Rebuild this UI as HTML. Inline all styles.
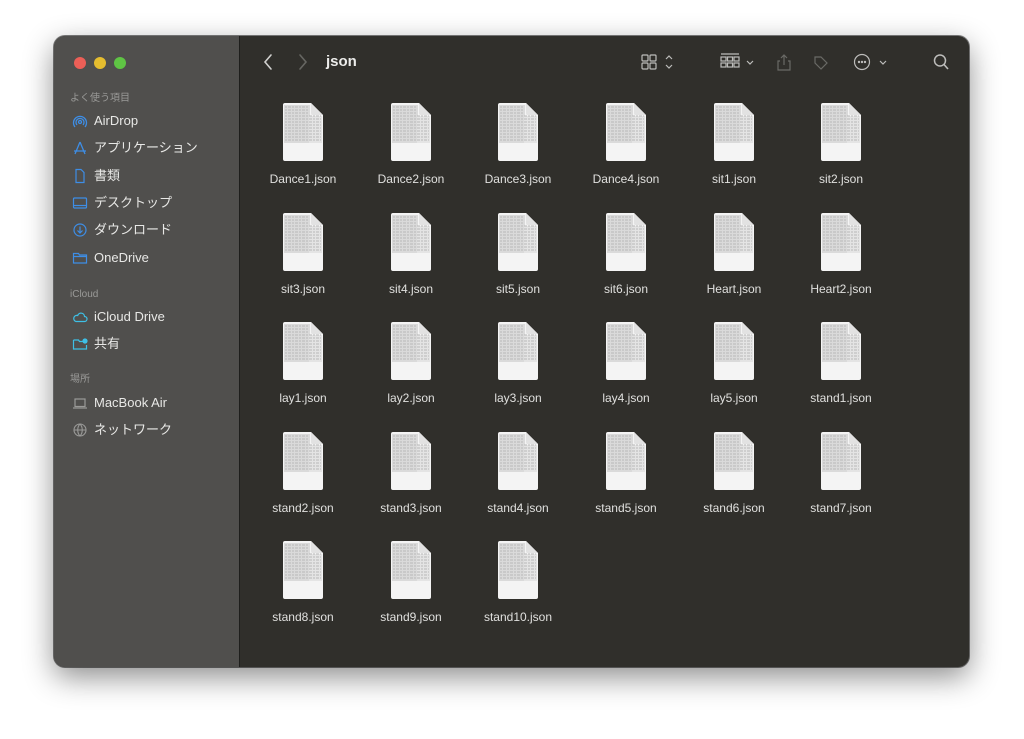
<!DOCTYPE html>
<html><head><meta charset="utf-8"><style>
*{margin:0;padding:0;box-sizing:border-box}
body{width:1024px;height:739px;background:#fff;font-family:"Liberation Sans","Noto Sans CJK JP",sans-serif;position:relative;overflow:hidden}
.win{position:absolute;left:54px;top:36px;width:915px;height:631px;border-radius:11px;background:#302f2b;box-shadow:0 10px 30px rgba(0,0,0,.45),0 0 0 1px rgba(0,0,0,.5);overflow:hidden}
.side{position:absolute;left:0;top:0;width:186px;height:100%;background:#504f4d;border-right:1px solid #1e1e1c}
.dot{position:absolute;top:21px;width:12px;height:12px;border-radius:50%}
.hd{position:absolute;left:16px;font-size:10px;line-height:12px;color:#9a9a98}
.it{position:absolute;left:18px;height:16px;line-height:16px;font-size:13px;color:#e8e8e6;white-space:nowrap}
.it svg{position:absolute;left:0;top:0;width:16px;height:16px}
.it span{position:absolute;left:22px;top:0}
.t{position:absolute;color:#dcdcda}
.f{position:absolute;width:44px;height:58px}
.lb{position:absolute;width:110px;text-align:center;font-size:12px;color:#e0e0de}
</style></head><body>
<div class="win">
<div class="side">
<div class="dot" style="left:20px;background:#ec5f57"></div>
<div class="dot" style="left:40px;background:#e5bd2f"></div>
<div class="dot" style="left:60px;background:#5fc444"></div>
<div class="hd" style="top:57px">よく使う項目</div>
<div class="it" style="top:77px"><svg viewBox="0 0 16 16" fill="none" stroke="#3e8ee6" stroke-width="1.3"><circle cx="8" cy="9" r="1.5"/><path d="M5 12a4 4 0 1 1 6 0M3 14a6.5 6.5 0 1 1 10 0"/></svg><span>AirDrop</span></div>
<div class="it" style="top:104px"><svg viewBox="0 0 16 16" fill="none" stroke="#3e8ee6" stroke-width="1.3"><path d="M8 2L3 14M8 2l5 12M2 11h12"/></svg><span>アプリケーション</span></div>
<div class="it" style="top:132px"><svg viewBox="0 0 16 16" fill="none" stroke="#3e8ee6" stroke-width="1.2"><path d="M4 1.5h5l3 3v10H4z"/></svg><span>書類</span></div>
<div class="it" style="top:159px"><svg viewBox="0 0 16 16" fill="none" stroke="#3e8ee6" stroke-width="1.2"><rect x="1.5" y="3" width="13" height="10" rx="1"/><path d="M1.5 10.5h13"/></svg><span>デスクトップ</span></div>
<div class="it" style="top:186px"><svg viewBox="0 0 16 16" fill="none" stroke="#3e8ee6" stroke-width="1.2"><circle cx="8" cy="8" r="6"/><path d="M8 4.5v6M5.5 8.5L8 11l2.5-2.5"/></svg><span>ダウンロード</span></div>
<div class="it" style="top:214px"><svg viewBox="0 0 16 16" fill="none" stroke="#3e8ee6" stroke-width="1.2"><path d="M1.5 3.5h5l1 1.5h7v8h-13z M1.5 6.5h13"/></svg><span>OneDrive</span></div>
<div class="hd" style="top:253px">iCloud</div>
<div class="it" style="top:273px"><svg viewBox="0 0 16 16" fill="none" stroke="#3ec0e6" stroke-width="1.2"><path d="M4 12.5h8.5a2.5 2.5 0 0 0 0-5 3.5 3.5 0 0 0-6.8-1A3 3 0 0 0 4 12.5z"/></svg><span>iCloud Drive</span></div>
<div class="it" style="top:300px"><svg viewBox="0 0 16 16" fill="none" stroke="#3ec0e6" stroke-width="1.2"><path d="M1.5 4h5l1 1.5h3M1.5 4v9h13V9"/><circle cx="13" cy="5" r="2" fill="#3ec0e6"/></svg><span>共有</span></div>
<div class="hd" style="top:338px">場所</div>
<div class="it" style="top:359px"><svg viewBox="0 0 16 16" fill="none" stroke="#9a9a98" stroke-width="1.2"><rect x="3" y="4" width="10" height="7.5"/><path d="M1 13h14"/></svg><span>MacBook Air</span></div>
<div class="it" style="top:386px"><svg viewBox="0 0 16 16" fill="none" stroke="#9a9a98" stroke-width="1.1"><circle cx="8" cy="8" r="6"/><path d="M2 8h12M8 2c-3 3-3 9 0 12M8 2c3 3 3 9 0 12"/></svg><span>ネットワーク</span></div>
</div>
<svg class="t" style="left:206px;top:16px" width="80" height="20" viewBox="0 0 80 20" fill="none" stroke-width="1.6" stroke-linecap="round"><path d="M11 3L5 10l6 7" stroke="#d0d0ce"/><path d="M40 3l6 7-6 7" stroke="#666662"/></svg>
<div class="t" style="left:272px;top:17px;font-size:15px;font-weight:bold;color:#ececea">json</div>
<svg class="t" style="left:586px;top:16px" width="340" height="22" viewBox="0 0 340 22" fill="none" stroke="#bdbdbb" stroke-width="1.2">
<rect x="2" y="3" width="6" height="6" rx="1"/><rect x="10" y="3" width="6" height="6" rx="1"/><rect x="2" y="11" width="6" height="6" rx="1"/><rect x="10" y="11" width="6" height="6" rx="1"/>
<path d="M26 7l3-3 3 3M26 13l3 3 3-3"/>
<path d="M81 2h18"/><rect x="81" y="5" width="5" height="4"/><rect x="87.5" y="5" width="5" height="4"/><rect x="94" y="5" width="5" height="4"/><rect x="81" y="11" width="5" height="4"/><rect x="87.5" y="11" width="5" height="4"/><rect x="94" y="11" width="5" height="4"/>
<path d="M107 9l3 3 3-3"/>
<g stroke="#6a6a66"><path d="M144 3v10M141 6l3-3 3 3M140 9h-2v9h12V9h-2"/><path d="M181 17l-6-6 0-6 6 0 6 6z"/></g>
<circle cx="222" cy="10" r="7.5"/><circle cx="219" cy="10" r=".6" fill="#bdbdbb"/><circle cx="222" cy="10" r=".6" fill="#bdbdbb"/><circle cx="225" cy="10" r=".6" fill="#bdbdbb"/>
<path d="M240 9l3 3 3-3"/>
<circle cx="300" cy="8.5" r="5.5" stroke-width="1.5"/><path d="M304 12.5l4 4.5" stroke-width="1.6"/>
</svg>
<div id="g"></div>
</div>
<script>
var n=["Dance1","Dance2","Dance3","Dance4","sit1","sit2","sit3","sit4","sit5","sit6","Heart","Heart2","lay1","lay2","lay3","lay4","lay5","stand1","stand2","stand3","stand4","stand5","stand6","stand7","stand8","stand9","stand10"];
var cx=[249,357,464,572,680,787],ty=[67,177,286,396,505],h="";
var lines="";for(var k=4;k<40;k+=3){lines+='<path d="M4 '+k+'h'+(k<12?24:36)+'" stroke="#b8b8b8" stroke-width="1" stroke-dasharray="2 1 3 1"/>';}
n.forEach(function(s,i){var c=i%6,r=Math.floor(i/6),x=cx[c];
h+='<svg class="f" style="left:'+(x-22)+'px;top:'+ty[r]+'px" viewBox="0 0 44 58"><path d="M2 0h28l12 12v44a2 2 0 0 1-2 2H4a2 2 0 0 1-2-2V2a2 2 0 0 1 2-2z" fill="#f4f4f4"/><rect x="3" y="2" width="26" height="38" fill="#dadada"/><rect x="28" y="13" width="13" height="27" fill="#e4e4e4"/>'+lines+'<path d="M30 0v10a2 2 0 0 0 2 2h10z" fill="#e2e2e2"/></svg>';
h+='<div class="lb" style="left:'+(x-55)+'px;top:'+(ty[r]+69)+'px">'+s+'.json</div>';});
document.getElementById("g").innerHTML=h;
</script>
</body></html>
